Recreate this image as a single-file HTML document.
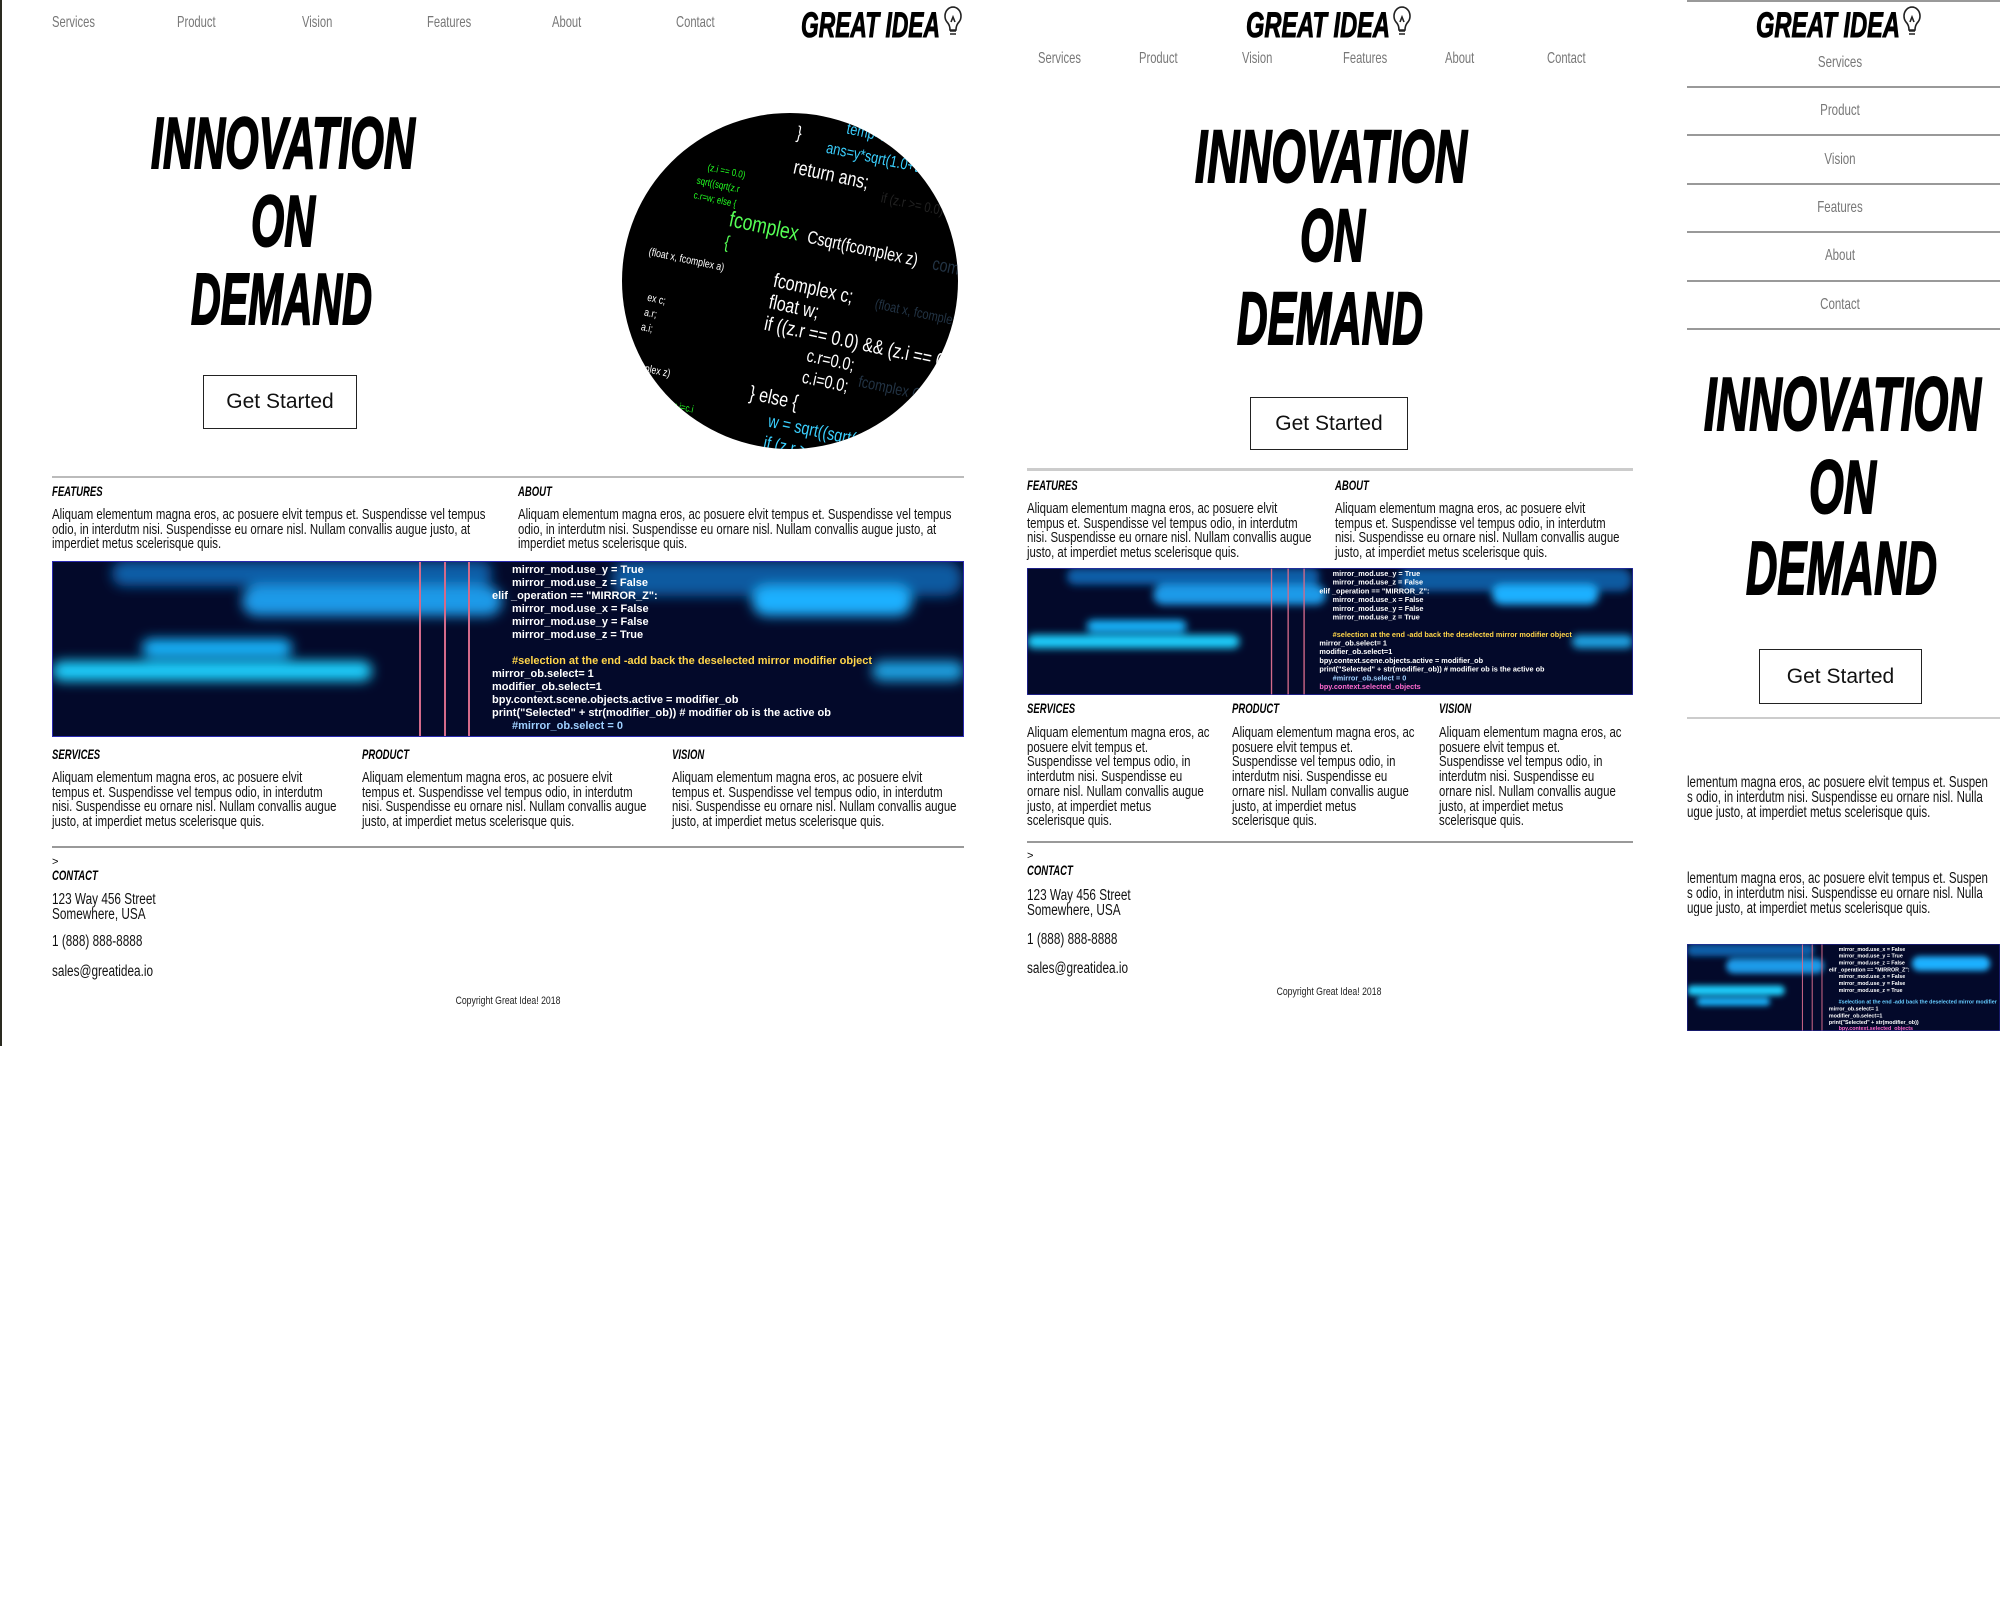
<!DOCTYPE html>
<html><head><meta charset="utf-8"><style>
*{margin:0;padding:0;box-sizing:border-box}
body{width:2000px;height:1600px;background:#fff;position:relative;overflow:hidden;font-family:"Liberation Sans Narrow","Liberation Sans",sans-serif}
.a{position:absolute;white-space:nowrap}
.nav{font-size:16px;color:#777;line-height:18px;transform:scaleX(.7);transform-origin:0 0}
.navc{font-size:16px;color:#777;line-height:18px;width:300px;text-align:center;transform:scaleX(.72)}
.p{position:absolute;font-size:15px;line-height:14.7px;color:#111;transform:scaleX(.76);transform-origin:0 0;white-space:nowrap}
.h{position:absolute;font-size:14px;font-weight:bold;font-style:italic;color:#000;line-height:16px;transform:scaleX(.68);transform-origin:0 0}
.btn{position:absolute;border:1.5px solid #222;font-family:"Liberation Sans",sans-serif;font-size:21px;color:#111;display:flex;align-items:center;justify-content:center;background:#fff}
.c{position:absolute;font-size:15.5px;line-height:15px;color:#111;transform:scaleX(.76);transform-origin:0 0;white-space:nowrap}
.hr{position:absolute;background:#bbb}
.cp{position:absolute;width:200px;text-align:center;font-size:11px;color:#222;transform:scaleX(.79);white-space:nowrap}
</style></head><body>

<div class="a" style="left:0;top:0;width:2px;height:1046px;background:#2a2a20"></div>

<svg class="a" style="left:0;top:0" width="2000" height="1600">
 <defs><clipPath id="cc"><circle cx="790" cy="281" r="168"/></clipPath>
 <filter id="bl" x="-50%" y="-50%" width="200%" height="200%"><feGaussianBlur stdDeviation="6"/></filter></defs>
 <g font-weight="bold" font-style="italic" fill="#000" stroke="#000" style="font-family:'Liberation Sans',sans-serif">
  <g stroke-width="1">
  <text x="801" y="37" font-size="35" textLength="139" lengthAdjust="spacingAndGlyphs">GREAT IDEA</text>
  <text x="1246" y="37" font-size="35" textLength="144" lengthAdjust="spacingAndGlyphs">GREAT IDEA</text>
  <text x="1756" y="37" font-size="35" textLength="144" lengthAdjust="spacingAndGlyphs">GREAT IDEA</text>
  </g>
  <g stroke-width="2">
  <text x="151" y="168" font-size="72" textLength="264" lengthAdjust="spacingAndGlyphs">INNOVATION</text>
  <text x="251" y="246" font-size="72" textLength="64" lengthAdjust="spacingAndGlyphs">ON</text>
  <text x="191" y="324" font-size="72" textLength="181" lengthAdjust="spacingAndGlyphs">DEMAND</text>
  <text x="1195" y="182" font-size="74" textLength="272" lengthAdjust="spacingAndGlyphs">INNOVATION</text>
  <text x="1300" y="261" font-size="74" textLength="65" lengthAdjust="spacingAndGlyphs">ON</text>
  <text x="1237" y="344" font-size="74" textLength="186" lengthAdjust="spacingAndGlyphs">DEMAND</text>
  <text x="1704" y="430" font-size="75" textLength="277" lengthAdjust="spacingAndGlyphs">INNOVATION</text>
  <text x="1809" y="513" font-size="75" textLength="67" lengthAdjust="spacingAndGlyphs">ON</text>
  <text x="1746" y="594" font-size="75" textLength="191" lengthAdjust="spacingAndGlyphs">DEMAND</text>
  </g>
 </g>
 <g fill="none" stroke="#222" stroke-width="1.6">
  <path d="M947 22 a8 9 0 1 1 12 0 q-3 3 -3 8 h-6 q0 -5 -3 -8z M950 31 h6 M950 34 h6 M951 22 l2 -5 l2 5"/>
  <path d="M1396 22 a8 9 0 1 1 12 0 q-3 3 -3 8 h-6 q0 -5 -3 -8z M1399 31 h6 M1399 34 h6 M1400 22 l2 -5 l2 5"/>
  <path d="M1906 22 a8 9 0 1 1 12 0 q-3 3 -3 8 h-6 q0 -5 -3 -8z M1909 31 h6 M1909 34 h6 M1910 22 l2 -5 l2 5"/>
 </g>
 <g clip-path="url(#cc)">
  <rect x="600" y="100" width="380" height="360" fill="#000"/>
  <g transform="rotate(12 790 281)" style="font-family:'Liberation Sans Narrow','Liberation Sans',sans-serif">
   <g transform="translate(790 281) scale(.8 1) translate(-790 -281)">
   <text x="820" y="125" fill="#3ad0ff" font-size="16">temp=x/y;</text>
   <text x="760" y="140" fill="#fff" font-size="18">}</text>
   <text x="800" y="148" fill="#3ad0ff" font-size="16">ans=y*sqrt(1.0+temp*temp</text>
   <text x="765" y="175" fill="#fff" font-size="20">return ans;</text>
   <text x="880" y="185" fill="#222" font-size="14">if (z.r &gt;= 0.0) w = sqrt</text>
   <text x="660" y="190" fill="#2f2" font-size="10">(z.i == 0.0)</text>
   <text x="650" y="205" fill="#2f2" font-size="10">sqrt((sqrt(z.r</text>
   <text x="650" y="220" fill="#2f2" font-size="10">c.r=w; else {</text>
   <text x="700" y="240" fill="#5f5" font-size="22">fcomplex</text>
   <text x="800" y="240" fill="#fff" font-size="18">Csqrt(fcomplex z)</text>
   <text x="960" y="240" fill="#234" font-size="18">complex Comp</text>
   <text x="700" y="262" fill="#5f5" font-size="18">{</text>
   <text x="610" y="285" fill="#fff" font-size="11">(float x, fcomplex a)</text>
   <text x="770" y="290" fill="#fff" font-size="20">fcomplex c;</text>
   <text x="900" y="290" fill="#234" font-size="14">(float x, fcomplex a)</text>
   <text x="770" y="312" fill="#fff" font-size="20">float w;</text>
   <text x="770" y="334" fill="#fff" font-size="20">if ((z.r == 0.0) &amp;&amp; (z.i == 0.0)) {</text>
   <text x="830" y="356" fill="#fff" font-size="18">c.r=0.0;</text>
   <text x="830" y="378" fill="#fff" font-size="18">c.i=0.0;</text>
   <text x="900" y="370" fill="#234" font-size="16">fcomplex Co</text>
   <text x="770" y="405" fill="#fff" font-size="20">} else {</text>
   <text x="800" y="428" fill="#3ad0ff" font-size="18">w = sqrt((sqrt(z.r</text>
   <text x="800" y="450" fill="#3ad0ff" font-size="18">if (z.r &gt;= 0.0) {</text>
   <text x="620" y="330" fill="#fff" font-size="11">ex c;</text>
   <text x="620" y="345" fill="#fff" font-size="11">a.r;</text>
   <text x="620" y="360" fill="#fff" font-size="11">a.i;</text>
   <text x="620" y="400" fill="#fff" font-size="11">omplex z)</text>
   <text x="640" y="430" fill="#2f2" font-size="10">c.r=z.r + z.i=c.i</text>
   </g>
  </g>
 </g>
</svg>

<div class="a nav" style="left:52px;top:14px">Services</div>
<div class="a nav" style="left:177px;top:14px">Product</div>
<div class="a nav" style="left:302px;top:14px">Vision</div>
<div class="a nav" style="left:427px;top:14px">Features</div>
<div class="a nav" style="left:552px;top:14px">About</div>
<div class="a nav" style="left:676px;top:14px">Contact</div>

<div class="btn" style="left:203px;top:375px;width:154px;height:54px">Get Started</div>
<div class="hr" style="left:52px;top:476px;width:912px;height:2px"></div>

<div class="h" style="left:52px;top:483px">FEATURES</div>
<div class="h" style="left:518px;top:483px">ABOUT</div>
<div class="p" style="left:52px;top:508px">Aliquam elementum magna eros, ac posuere elvit tempus et. Suspendisse vel tempus<br>odio, in interdutm nisi. Suspendisse eu ornare nisl. Nullam convallis augue justo, at<br>imperdiet metus scelerisque quis.</div>
<div class="p" style="left:518px;top:508px">Aliquam elementum magna eros, ac posuere elvit tempus et. Suspendisse vel tempus<br>odio, in interdutm nisi. Suspendisse eu ornare nisl. Nullam convallis augue justo, at<br>imperdiet metus scelerisque quis.</div>

<svg class="a" style="left:52px;top:561px" width="912" height="176" viewBox="0 0 912 176" preserveAspectRatio="none">
 <rect width="912" height="176" fill="#03092a"/>
 <g filter="url(#bl)">
  <rect x="60" y="0" width="380" height="25" rx="12" fill="#0a5fa8"/>
  <rect x="190" y="25" width="260" height="30" rx="15" fill="#1a9ae8"/>
  <rect x="560" y="0" width="350" height="35" rx="16" fill="#0b5aa0"/>
  <rect x="700" y="25" width="160" height="30" rx="15" fill="#1fb0ff"/>
  <rect x="90" y="78" width="150" height="18" rx="9" fill="#18b6ff"/>
  <rect x="0" y="100" width="320" height="20" rx="10" fill="#1bd0ff"/>
  <rect x="820" y="100" width="92" height="20" rx="10" fill="#1aa0e0"/>
 </g>
 <g fill="#d46a8a"><rect x="367" y="0" width="2" height="176"/><rect x="392" y="0" width="2" height="176"/><rect x="416" y="0" width="2" height="176"/></g>
 <g font-size="11" font-weight="bold" fill="#fff">
  <text x="460" y="12">mirror_mod.use_y = True</text>
  <text x="460" y="25">mirror_mod.use_z = False</text>
  <text x="440" y="38">elif _operation == "MIRROR_Z":</text>
  <text x="460" y="51">mirror_mod.use_x = False</text>
  <text x="460" y="64">mirror_mod.use_y = False</text>
  <text x="460" y="77">mirror_mod.use_z = True</text>
  <text x="460" y="103" fill="#ffd54a">#selection at the end -add back the deselected mirror modifier object</text>
  <text x="440" y="116">mirror_ob.select= 1</text>
  <text x="440" y="129">modifier_ob.select=1</text>
  <text x="440" y="142">bpy.context.scene.objects.active = modifier_ob</text>
  <text x="440" y="155">print("Selected" + str(modifier_ob)) # modifier ob is the active ob</text>
  <text x="460" y="168" fill="#9fd0ff">#mirror_ob.select = 0</text>
 </g>
 <rect width="912" height="176" fill="none" stroke="#2a2ab0" stroke-width="2"/>
</svg>

<div class="h" style="left:52px;top:746px">SERVICES</div>
<div class="h" style="left:362px;top:746px">PRODUCT</div>
<div class="h" style="left:672px;top:746px">VISION</div>
<div class="p" style="left:52px;top:771px">Aliquam elementum magna eros, ac posuere elvit<br>tempus et. Suspendisse vel tempus odio, in interdutm<br>nisi. Suspendisse eu ornare nisl. Nullam convallis augue<br>justo, at imperdiet metus scelerisque quis.</div>
<div class="p" style="left:362px;top:771px">Aliquam elementum magna eros, ac posuere elvit<br>tempus et. Suspendisse vel tempus odio, in interdutm<br>nisi. Suspendisse eu ornare nisl. Nullam convallis augue<br>justo, at imperdiet metus scelerisque quis.</div>
<div class="p" style="left:672px;top:771px">Aliquam elementum magna eros, ac posuere elvit<br>tempus et. Suspendisse vel tempus odio, in interdutm<br>nisi. Suspendisse eu ornare nisl. Nullam convallis augue<br>justo, at imperdiet metus scelerisque quis.</div>
<div class="hr" style="left:52px;top:846px;width:912px;height:2px;background:#999"></div>
<div class="a" style="left:52px;top:856px;font-size:11px">&gt;</div>
<div class="h" style="left:52px;top:867px">CONTACT</div>
<div class="c" style="left:52px;top:892px">123 Way 456 Street<br>Somewhere, USA</div>
<div class="c" style="left:52px;top:934px">1 (888) 888-8888</div>
<div class="c" style="left:52px;top:964px">sales@greatidea.io</div>
<div class="cp" style="left:408px;top:995px">Copyright Great Idea! 2018</div>

<!-- PANEL 2 -->
<div class="a nav" style="left:1038px;top:50px">Services</div>
<div class="a nav" style="left:1139px;top:50px">Product</div>
<div class="a nav" style="left:1242px;top:50px">Vision</div>
<div class="a nav" style="left:1343px;top:50px">Features</div>
<div class="a nav" style="left:1445px;top:50px">About</div>
<div class="a nav" style="left:1547px;top:50px">Contact</div>
<div class="btn" style="left:1250px;top:397px;width:158px;height:53px">Get Started</div>
<div class="hr" style="left:1027px;top:468px;width:606px;height:3px;background:#ccc"></div>
<div class="h" style="left:1027px;top:477px">FEATURES</div>
<div class="h" style="left:1335px;top:477px">ABOUT</div>
<div class="p" style="left:1027px;top:502px">Aliquam elementum magna eros, ac posuere elvit<br>tempus et. Suspendisse vel tempus odio, in interdutm<br>nisi. Suspendisse eu ornare nisl. Nullam convallis augue<br>justo, at imperdiet metus scelerisque quis.</div>
<div class="p" style="left:1335px;top:502px">Aliquam elementum magna eros, ac posuere elvit<br>tempus et. Suspendisse vel tempus odio, in interdutm<br>nisi. Suspendisse eu ornare nisl. Nullam convallis augue<br>justo, at imperdiet metus scelerisque quis.</div>

<svg class="a" style="left:1027px;top:568px" width="606" height="127" viewBox="0 0 912 190" preserveAspectRatio="none">
 <rect width="912" height="190" fill="#03092a"/>
 <g filter="url(#bl)">
  <rect x="60" y="0" width="380" height="25" rx="12" fill="#0a5fa8"/>
  <rect x="190" y="25" width="260" height="30" rx="15" fill="#1a9ae8"/>
  <rect x="560" y="0" width="350" height="35" rx="16" fill="#0b5aa0"/>
  <rect x="700" y="25" width="160" height="30" rx="15" fill="#1fb0ff"/>
  <rect x="90" y="78" width="150" height="18" rx="9" fill="#18b6ff"/>
  <rect x="0" y="100" width="320" height="20" rx="10" fill="#1bd0ff"/>
  <rect x="820" y="100" width="92" height="20" rx="10" fill="#1aa0e0"/>
 </g>
 <g fill="#d46a8a"><rect x="367" y="0" width="2" height="190"/><rect x="392" y="0" width="2" height="190"/><rect x="416" y="0" width="2" height="190"/></g>
 <g font-size="11" font-weight="bold" fill="#fff">
  <text x="460" y="12">mirror_mod.use_y = True</text>
  <text x="460" y="25">mirror_mod.use_z = False</text>
  <text x="440" y="38">elif _operation == "MIRROR_Z":</text>
  <text x="460" y="51">mirror_mod.use_x = False</text>
  <text x="460" y="64">mirror_mod.use_y = False</text>
  <text x="460" y="77">mirror_mod.use_z = True</text>
  <text x="460" y="103" fill="#ffd54a">#selection at the end -add back the deselected mirror modifier object</text>
  <text x="440" y="116">mirror_ob.select= 1</text>
  <text x="440" y="129">modifier_ob.select=1</text>
  <text x="440" y="142">bpy.context.scene.objects.active = modifier_ob</text>
  <text x="440" y="155">print("Selected" + str(modifier_ob)) # modifier ob is the active ob</text>
  <text x="460" y="168" fill="#9fd0ff">#mirror_ob.select = 0</text>
  <text x="440" y="181" fill="#ff6ad0">bpy.context.selected_objects</text>
 </g>
 <rect width="912" height="190" fill="none" stroke="#2a2ab0" stroke-width="2"/>
</svg>

<div class="h" style="left:1027px;top:700px">SERVICES</div>
<div class="h" style="left:1232px;top:700px">PRODUCT</div>
<div class="h" style="left:1439px;top:700px">VISION</div>
<div class="p" style="left:1027px;top:726px">Aliquam elementum magna eros, ac<br>posuere elvit tempus et.<br>Suspendisse vel tempus odio, in<br>interdutm nisi. Suspendisse eu<br>ornare nisl. Nullam convallis augue<br>justo, at imperdiet metus<br>scelerisque quis.</div>
<div class="p" style="left:1232px;top:726px">Aliquam elementum magna eros, ac<br>posuere elvit tempus et.<br>Suspendisse vel tempus odio, in<br>interdutm nisi. Suspendisse eu<br>ornare nisl. Nullam convallis augue<br>justo, at imperdiet metus<br>scelerisque quis.</div>
<div class="p" style="left:1439px;top:726px">Aliquam elementum magna eros, ac<br>posuere elvit tempus et.<br>Suspendisse vel tempus odio, in<br>interdutm nisi. Suspendisse eu<br>ornare nisl. Nullam convallis augue<br>justo, at imperdiet metus<br>scelerisque quis.</div>
<div class="hr" style="left:1027px;top:841px;width:606px;height:2px;background:#999"></div>
<div class="a" style="left:1027px;top:850px;font-size:11px">&gt;</div>
<div class="h" style="left:1027px;top:862px">CONTACT</div>
<div class="c" style="left:1027px;top:888px">123 Way 456 Street<br>Somewhere, USA</div>
<div class="c" style="left:1027px;top:932px">1 (888) 888-8888</div>
<div class="c" style="left:1027px;top:961px">sales@greatidea.io</div>
<div class="cp" style="left:1229px;top:986px">Copyright Great Idea! 2018</div>

<!-- PANEL 3 -->
<div class="hr" style="left:1687px;top:0;width:313px;height:2px;background:#999"></div>
<div class="a navc" style="left:1690px;top:54px">Services</div>
<div class="a navc" style="left:1690px;top:102px">Product</div>
<div class="a navc" style="left:1690px;top:151px">Vision</div>
<div class="a navc" style="left:1690px;top:199px">Features</div>
<div class="a navc" style="left:1690px;top:247px">About</div>
<div class="a navc" style="left:1690px;top:296px">Contact</div>
<div class="hr" style="left:1687px;top:86px;width:313px;height:2px;background:#999"></div>
<div class="hr" style="left:1687px;top:134px;width:313px;height:2px;background:#999"></div>
<div class="hr" style="left:1687px;top:183px;width:313px;height:2px;background:#999"></div>
<div class="hr" style="left:1687px;top:231px;width:313px;height:2px;background:#999"></div>
<div class="hr" style="left:1687px;top:280px;width:313px;height:2px;background:#999"></div>
<div class="hr" style="left:1687px;top:328px;width:313px;height:2px;background:#999"></div>
<div class="btn" style="left:1759px;top:649px;width:163px;height:55px">Get Started</div>
<div class="hr" style="left:1687px;top:717px;width:313px;height:2px;background:#ccc"></div>
<div class="a" style="left:1687px;top:770px;width:313px;height:50px;overflow:hidden">
 <div class="p" style="left:0;top:5px;font-size:16px;line-height:15px;transform:scaleX(.72)">lementum magna eros, ac posuere elvit tempus et. Suspen<br>s odio, in interdutm nisi. Suspendisse eu ornare nisl. Nulla<br>ugue justo, at imperdiet metus scelerisque quis.</div></div>
<div class="a" style="left:1687px;top:866px;width:313px;height:50px;overflow:hidden">
 <div class="p" style="left:0;top:5px;font-size:16px;line-height:15px;transform:scaleX(.72)">lementum magna eros, ac posuere elvit tempus et. Suspen<br>s odio, in interdutm nisi. Suspendisse eu ornare nisl. Nulla<br>ugue justo, at imperdiet metus scelerisque quis.</div></div>

<svg class="a" style="left:1687px;top:944px" width="313" height="87" viewBox="0 0 640 178" preserveAspectRatio="none">
 <rect width="640" height="178" fill="#03092a"/>
 <g filter="url(#bl)">
  <rect x="0" y="0" width="260" height="25" rx="12" fill="#0a5fa8"/>
  <rect x="80" y="30" width="200" height="30" rx="15" fill="#1a9ae8"/>
  <rect x="460" y="25" width="160" height="30" rx="15" fill="#1fb0ff"/>
  <rect x="0" y="85" width="200" height="20" rx="10" fill="#1bd0ff"/>
  <rect x="20" y="110" width="150" height="16" rx="8" fill="#18b6ff"/>
 </g>
 <g fill="#d46a8a"><rect x="235" y="0" width="2" height="178"/><rect x="255" y="0" width="2" height="178"/><rect x="275" y="0" width="2" height="178"/></g>
 <g font-size="11" font-weight="bold" fill="#fff">
  <text x="310" y="14">mirror_mod.use_x = False</text>
  <text x="310" y="28">mirror_mod.use_y = True</text>
  <text x="310" y="42">mirror_mod.use_z = False</text>
  <text x="290" y="56">elif _operation == "MIRROR_Z":</text>
  <text x="310" y="70">mirror_mod.use_x = False</text>
  <text x="310" y="84">mirror_mod.use_y = False</text>
  <text x="310" y="98">mirror_mod.use_z = True</text>
  <text x="310" y="122" fill="#6cf">#selection at the end -add back the deselected mirror modifier</text>
  <text x="290" y="136">mirror_ob.select= 1</text>
  <text x="290" y="150">modifier_ob.select=1</text>
  <text x="290" y="164">print("Selected" + str(modifier_ob))</text>
  <text x="310" y="176" fill="#ff6ad0">bpy.context.selected_objects</text>
 </g>
 <rect width="640" height="178" fill="none" stroke="#2a2ab0" stroke-width="2"/>
</svg>

</body></html>
